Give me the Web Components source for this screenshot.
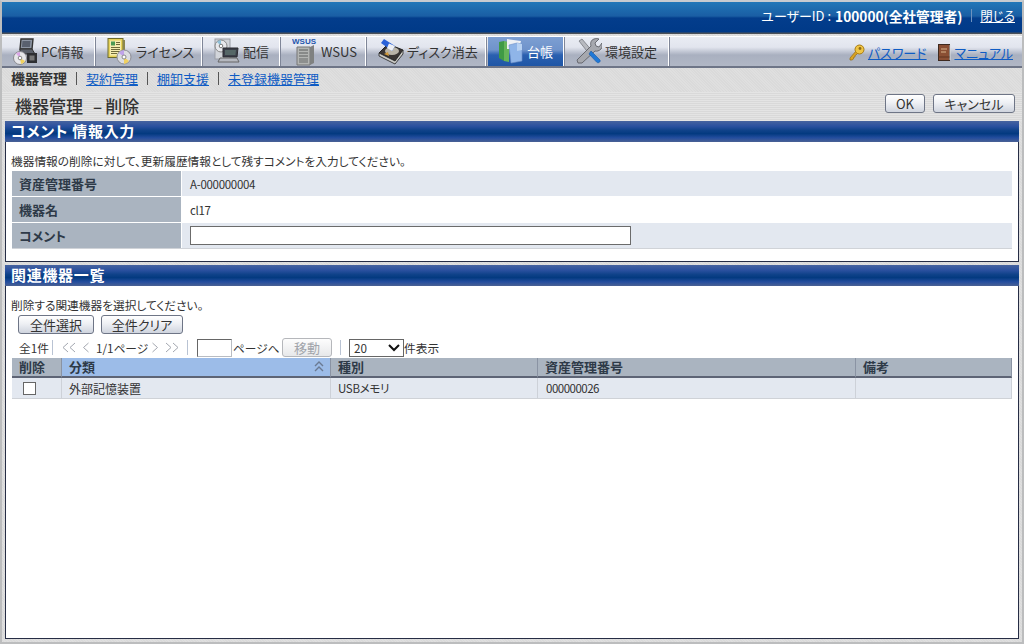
<!DOCTYPE html>
<html lang="ja">
<head>
<meta charset="utf-8">
<title>機器管理 - 削除</title>
<style>
  html, body { margin: 0; height: 100%; overflow: hidden; }
  body {
    font-family: "Noto Sans CJK JP", "Liberation Sans", sans-serif;
    font-size: 13px;
    color: #333;
    font-feature-settings: "palt";
  }
</style>
</head>
<body>
<app-shell>
  <app-header></app-header>

  <tab-bar>
    <nav-tab style="width:93px">
      <svg slot="icon" width="26" height="27" viewBox="0 0 26 27">
        <path d="M9 1h12l-1 10H8z" fill="#8d95a3" stroke="#333" stroke-width="1.4"/>
        <path d="M10.500 3h8l-.6 6h-8z" fill="#59606e"/>
        <path d="M8 11h12l3 5H8z" fill="#5a5f69" stroke="#333"/>
        <circle cx="8" cy="20" r="6.500" fill="#e7e7ea" stroke="#8a8a90"/>
        <path d="M8 20L4 15.500A6 6 0 0 1 8 14z" fill="#d9a6e6"/>
        <path d="M8 20l5 3a6 6 0 0 1-4 3z" fill="#f2d25c"/>
        <circle cx="8" cy="20" r="1.800" fill="#fff" stroke="#888"/>
        <rect x="15" y="15" width="10" height="10" fill="#2e2f33"/>
        <rect x="17.500" y="17.500" width="5" height="5" fill="#777"/>
      </svg>
      PC情報
    </nav-tab>
    <nav-tab style="width:105px">
      <svg slot="icon" width="26" height="27" viewBox="0 0 26 27">
        <rect x="1" y="0.500" width="15" height="19" fill="#e6d25a" stroke="#6d6a2c"/>
        <rect x="3" y="2.500" width="11" height="15" fill="#f5ecb0"/>
        <rect x="4" y="3.500" width="4" height="4" fill="#4c9a55"/>
        <path d="M9 4.500h4M9 6.500h4M4 9.500h9M4 11.500h9M4 13.500h9M4 15.500h6" stroke="#6e6a3a"/>
        <path d="M16 2h2v16h-2z" fill="#8b8750"/>
        <circle cx="17" cy="19" r="7" fill="#dcdde2" stroke="#8d8d94"/>
        <path d="M17 19l-5-4a7 7 0 0 1 5-3z" fill="#c0a3ea"/>
        <path d="M17 19l5 4a7 7 0 0 1-5 3z" fill="#f0d060"/>
        <circle cx="17" cy="19" r="2" fill="#fff" stroke="#888"/>
      </svg>
      ライセンス
    </nav-tab>
    <nav-tab style="width:76px">
      <svg slot="icon" width="26" height="27" viewBox="0 0 26 27">
        <rect x="1" y="1" width="15" height="20" fill="#d2d5da" stroke="#9a9da5"/>
        <circle cx="7" cy="8" r="6" fill="#e7e8ec" stroke="#888"/>
        <path d="M7 8L3 4a6 6 0 0 1 4-2z" fill="#8fc0d8"/>
        <circle cx="7" cy="8" r="1.800" fill="#fff" stroke="#777"/>
        <path d="M9 10h15l-1 9H9z" fill="#3b3f49" stroke="#2b2b30"/>
        <path d="M11 12h11l-.6 5H11z" fill="#566"/>
        <path d="M6 20h17l2 4H4z" fill="#b5b8bf" stroke="#666"/>
      </svg>
      配信
    </nav-tab>
    <nav-tab style="width:84px">
      <svg slot="icon" width="26" height="29" viewBox="0 0 26 29" style="margin-top:-1px">
        <text x="0" y="7" font-family="Liberation Sans" font-size="8" font-weight="700" fill="#1f56ad">WSUS</text>
        <path d="M5 10h13v18H5z" fill="#b3b5b3" stroke="#777"/>
        <path d="M18 10l4-2v18l-4 2z" fill="#7f8180"/>
        <path d="M7 13h9M7 16h9M7 19h9" stroke="#5d5f5e"/>
        <rect x="7" y="21" width="9" height="5" fill="#8d8f8e"/>
      </svg>
      WSUS
    </nav-tab>
    <nav-tab style="width:118px">
      <svg slot="icon" width="26" height="27" viewBox="0 0 26 27">
        <path d="M1 15l9-9 15 6-8 11z" fill="#3a3634" stroke="#222"/>
        <path d="M1 15v3l16 8 8-10v-4l-8 11z" fill="#c8c8c4" stroke="#222" stroke-width=".8"/>
        <ellipse cx="14" cy="13" rx="7" ry="4" fill="#b9b4a8"/>
        <path d="M10 14l-4 2 5 2z" fill="#d29a3a"/>
        <path d="M3 5l3-4 11 7-3 5z" fill="#2a62d8"/>
        <path d="M11 5.500l6 2.500-3 5-5-3z" fill="#eef0f4"/>
      </svg>
      ディスク消去
    </nav-tab>
    <nav-tab active style="width:76px">
      <svg slot="icon" width="26" height="27" viewBox="0 0 26 27">
        <path d="M1 4l5-1v20l-5-3z" fill="#3f9a45"/>
        <path d="M6 3l5 1v20l-5-1z" fill="#66b45a"/>
        <path d="M9 1l14 2-2 8H9z" fill="#eef1f5"/>
        <path d="M11 7l8-2 5 1v17l-11 2z" fill="#8fb5e8" stroke="#6d8fc6" stroke-width=".6"/>
        <path d="M19 5v8l5-1V6z" fill="#b8d2f2"/>
      </svg>
      台帳
    </nav-tab>
    <nav-tab style="width:103px">
      <svg slot="icon" width="26" height="27" viewBox="0 0 26 27">
        <path d="M3 3l3-2 11 13-3 3z" fill="#b8bac0" stroke="#6c6e75" stroke-width=".7"/>
        <path d="M2 25l-1-3L15 8c-1-3 0-6 3-7 2-.7 3.500-.6 5 0l-4 4 1 3 3 1 3-4c.6 2 .4 4.500-1 6-2 2-4 2.500-6 2L6 25z" fill="#a6a8ae" stroke="#55575d" stroke-width=".8"/>
        <path d="M15 13l9 9c.5 1 0 2-1 2.500-.8.4-1.700.3-2.400-.4L13 16z" fill="#1f78d6" stroke="#1456a6" stroke-width=".6"/>
      </svg>
      環境設定
    </nav-tab>
    <span slot="tools">
      <tool-link>
        <svg slot="icon" width="16" height="17" viewBox="0 0 16 17">
          <path d="M1 14l6-7 2 2-2 2-1 .5v1.500l-1.500.5v1.500L3 16H1z" fill="#d9a325" stroke="#9a6d10" stroke-width=".7"/>
          <circle cx="10.500" cy="5.500" r="4.500" fill="#f0c544" stroke="#a67a14"/>
          <circle cx="11" cy="4.500" r="1.400" fill="#8d6a18"/>
        </svg>
        パスワード
      </tool-link>
      <tool-link>
        <svg slot="icon" width="13" height="17" viewBox="0 0 13 17">
          <rect x="0.500" y="0.500" width="11" height="16" fill="#8a4f34" stroke="#3e2a20"/>
          <path d="M12 1v15" stroke="#ddd"/>
          <path d="M3 5h6M3 8h5" stroke="#d8b58c"/>
          <path d="M0.500 13h11" stroke="#5f3520"/>
        </svg>
        マニュアル
      </tool-link>
    </span>
  </tab-bar>

  <sub-nav>
    <b>機器管理</b><i></i>
    <a href="#">契約管理</a><i></i>
    <a href="#">棚卸支援</a><i></i>
    <a href="#">未登録機器管理</a>
  </sub-nav>

  <page-title>
    機器管理<span style="margin:0 3px 0 10px">–</span>削除
    <ui-button slot="actions" style="width:40px">OK</ui-button>
    <ui-button slot="actions" style="width:82px">キャンセル</ui-button>
  </page-title>

  <ui-panel heading="コメント 情報入力" style="height:141px">
    <p-note>機器情報の削除に対して、更新履歴情報として残すコメントを入力してください。</p-note>
    <info-row label="資産管理番号" shade><mono-text>A-000000004</mono-text></info-row>
    <info-row label="機器名"><mono-text>cl17</mono-text></info-row>
    <info-row label="コメント" shade last><text-field style="width:441px"></text-field></info-row>
  </ui-panel>

  <ui-panel heading="関連機器一覧" style="flex:1; margin-top:3px">
    <p-note>削除する関連機器を選択してください。</p-note>
    <button-row>
      <ui-button style="width:76px">全件選択</ui-button>
      <ui-button style="width:82px">全件クリア</ui-button>
    </button-row>
    <pager-bar></pager-bar>
    <device-table></device-table>
  </ui-panel>
</app-shell>

<script>
const sheet = `
  :host { box-sizing: border-box; }
  * { box-sizing: border-box; }
`;

class ShadowBase extends HTMLElement {
  constructor() {
    super();
    this.attachShadow({ mode: 'open' });
    this.shadowRoot.innerHTML = `<style>${sheet}${this.constructor.css}</style>${this.render()}`;
  }

  render() {
    return '<slot></slot>';
  }
}

class AppShell extends ShadowBase {
  static css = `
    :host {
      display: flex;
      flex-direction: column;
      width: 1024px;
      height: 644px;
      padding-bottom: 3px;
      overflow: hidden;
      border: 2px solid #bcbdbe;
      border-top-color: #c6cbd0;
      background: repeating-linear-gradient(45deg, #dfdfdf 0 1px, #dadada 1px 2px);
    }
  `;
}

class AppHeader extends ShadowBase {
  static css = `
    :host {
      display: flex;
      flex: none;
      justify-content: flex-end;
      align-items: center;
      height: 32px;
      padding: 0 7px 5px 0;
      color: #fff;
      font-size: 13px;
      background: linear-gradient(#2177b8 0, #1a5ea4 14px, #0f4f98 15px, #033d8c 16px, #003a88 30px, #4a5058 31px, #4a5058 32px);
    }
    b { font-size: 13.700px; margin-left: 4px; }
    i { width: 1px; height: 13px; background: #6d92bf; margin: 0 8px 0 9px; }
    a { color: #fff; font-size: 12.500px; }
  `;

  render() {
    return `ユーザーID : <b>100000(全社管理者)</b><i></i><a href="#">閉じる</a>`;
  }
}

class TabBar extends ShadowBase {
  static css = `
    :host {
      display: flex;
      flex: none;
      gap: 2px;
      height: 32px;
      margin-top: 2px;
      border-top: 1px solid #fff;
      border-bottom: 2px solid #6e7587;
      background: linear-gradient(#e9ecf3, #e2e5ee 35%, #a9b0c0 62%, #b1b7c5);
    }
    .tools { margin-left: auto; display: flex; align-items: center; padding-right: 9px; }
  `;

  render() {
    return `<slot></slot><div class="tools"><slot name="tools"></slot></div>`;
  }
}

class NavTab extends ShadowBase {
  static css = `
    :host {
      display: flex;
      flex: none;
      align-items: center;
      gap: 3px;
      height: 29px;
      padding-left: 10px;
      color: #333;
      font-size: 13px;
      white-space: nowrap;
      border-right: 1px solid #fff;
      box-shadow: 1px 0 0 #7f8698;
    }
    :host([active]) {
      color: #fff;
      background: linear-gradient(#7d9fd2, #6f93cb 45%, #2a60b0 62%, #1f56a6);
    }
    ::slotted(svg) { flex: none; }
  `;

  render() {
    return `<slot name="icon"></slot><slot></slot>`;
  }
}

class ToolLink extends ShadowBase {
  static css = `
    :host {
      display: inline-flex;
      align-items: center;
      gap: 3px;
      margin-left: 9px;
      color: #0f5cc4;
      text-decoration: underline;
      font-size: 13px;
      vertical-align: middle;
    }
  `;

  render() {
    return `<slot name="icon"></slot><span><slot></slot></span>`;
  }
}

class SubNav extends ShadowBase {
  static css = `
    :host {
      display: flex;
      flex: none;
      align-items: center;
      height: 24px;
      padding: 0 0 4px 9px;
      font-size: 13px;
    }
    ::slotted(a) { color: #0f5cc4; }
    ::slotted(b) { font-size: 14px; }
    ::slotted(i) { width: 1px; height: 13px; margin: 0 9px; background: #555; }
  `;
}

class PageTitle extends ShadowBase {
  static css = `
    :host {
      display: flex;
      flex: none;
      justify-content: space-between;
      height: 29px;
      padding: 2px 7px 0 13px;
      font-size: 17px;
      line-height: 23px;
      font-weight: 500;
      color: #333;
      background: repeating-linear-gradient(#e4e4e4 0 1px, #d9d9d9 1px 2px);
    }
    .actions { display: flex; gap: 8px; align-items: flex-start; }
  `;

  render() {
    return `<span><slot></slot></span><div class="actions"><slot name="actions"></slot></div>`;
  }
}

class UiButton extends ShadowBase {
  static css = `
    :host {
      display: inline-flex;
      align-items: center;
      justify-content: center;
      height: 19px;
      font-size: 13px;
      line-height: 17px;
      font-weight: 400;
      color: #333;
      white-space: nowrap;
      border: 1px solid #6e7586;
      border-radius: 3px;
      background: linear-gradient(#fff, #eef0f4 45%, #cfd4de);
    }
    :host([disabled]) {
      color: #a2a5ab;
      border-color: #b5b7bb;
      background: linear-gradient(#fdfdfd, #e7e8ea);
    }
  `;
}

class UiPanel extends ShadowBase {
  static css = `
    :host {
      display: flex;
      flex-direction: column;
      flex: none;
      margin: 0 3px;
      width: 1014px;
    }
    h2 {
      flex: none;
      margin: 0;
      height: 21px;
      padding-left: 6px;
      color: #fff;
      font-size: 15px;
      line-height: 20px;
      font-weight: 700;
      letter-spacing: .7px;
      background: linear-gradient(#46639f, #2a509f 25%, #0f4289 45%, #033a80 60%, #234d9e 80%, #4a6194);
    }
    .body {
      flex: 1;
      padding: 0 6px;
      background: #fff;
      border: 1px solid #262d45;
      border-top: 0;
    }
  `;

  render() {
    return `<h2>${this.getAttribute('heading')}</h2><div class="body"><slot></slot></div>`;
  }
}

class PNote extends ShadowBase {
  static css = `
    :host {
      display: block;
      height: 17px;
      margin: 11px 0 0 -1px;
      font-size: 11.700px;
      line-height: 15px;
      color: #333;
    }
  `;
}

class InfoRow extends ShadowBase {
  static css = `
    :host {
      display: grid;
      grid-template-columns: 169px 1fr;
      gap: 1px;
      height: 25px;
      margin: 1px 0;
      font-size: 12px;
    }
    :host([last]) { border-bottom: 1px solid #d0d3d8; height: 26px; }
    .label {
      display: flex;
      align-items: center;
      padding-left: 7px;
      font-size: 13px;
      font-weight: 700;
      color: #2e3a48;
      background: #aab4c0;
    }
    .value { display: flex; align-items: center; padding-left: 8px; background: #fff; }
    :host([shade]) .value { background: #e3e8f0; }
  `;

  render() {
    return `<div class="label">${this.getAttribute('label')}</div><div class="value"><slot></slot></div>`;
  }
}

class MonoText extends ShadowBase {
  static css = `
    :host { font-size: 11.500px; letter-spacing: -.3px; color: #333; font-feature-settings: normal; }
  `;
}

class TextField extends ShadowBase {
  static css = `
    :host {
      display: block;
      height: 19px;
      background: #fff;
      border: 1px solid #6b6b6b;
    }
  `;
}

class ButtonRow extends ShadowBase {
  static css = `
    :host { display: flex; gap: 7px; height: 23px; padding-left: 6px; align-items: flex-start; margin-top: 1px; }
  `;
}

class PagerBar extends ShadowBase {
  static css = `
    :host {
      display: flex;
      align-items: center;
      height: 19px;
      padding-left: 7px;
      font-size: 11.700px;
      color: #333;
      white-space: nowrap;
    }
    i { flex: none; width: 1px; height: 15px; background: #b9c3d3; }
    svg { flex: none; }
    .box { flex: none; width: 35px; height: 18px; background: #fff; border: 1px solid #b8bcc2; border-top-color: #666; border-left-color: #666; }
    .sel {
      flex: none;
      display: flex; align-items: center; justify-content: space-between;
      width: 55px; height: 18px; padding: 0 3px 0 4px; background: #fff; border: 1px solid #666;
    }
    ui-button { flex: none; width: 50px; }
  `;

  render() {
    const dbl = (d) => `<svg width="14" height="11" viewBox="0 0 14 11"><path d="${d}" fill="none" stroke="#a3a7b0"/></svg>`;
    const one = (d) => `<svg width="6" height="11" viewBox="0 0 6 11"><path d="${d}" fill="none" stroke="#a3a7b0"/></svg>`;
    return `<span style="width:30px">全1件</span><i style="margin:0 9px 0 3px"></i>
      ${dbl('M6 1L1 5.500 6 10M13 1L8 5.500 13 10')}
      <span style="width:7px"></span>
      ${one('M5.500 1L.5 5.500 5.500 10')}
      <span style="width:51px;margin:0 5px 0 7px">1/1ページ</span>
      ${one('M.5 1l5 4.500-5 4.500')}
      <span style="width:7px"></span>
      ${dbl('M1 1l5 4.500-5 4.500M8 1l5 4.500-5 4.500')}
      <i style="margin:0 9px 0 8px"></i>
      <div class="box"></div><span style="width:45px;margin:0 4px 0 1px">ページへ</span>
      <ui-button disabled>移動</ui-button>
      <i style="margin:0 8px"></i>
      <div class="sel">20
        <svg width="12" height="8" viewBox="0 0 12 8"><path d="M1 1l5 5 5-5" fill="none" stroke="#111" stroke-width="2"/></svg>
      </div>件表示`;
  }
}

class DeviceTable extends ShadowBase {
  static css = `
    :host {
      display: block;
      margin-top: 1px;
      font-size: 12px;
    }
    .row {
      display: grid;
      grid-template-columns: 50px 269px 207px 318px 156px;
    }
    .head > div {
      display: flex;
      align-items: center;
      justify-content: space-between;
      height: 20px;
      padding: 0 6px 2px 7px;
      font-size: 13px;
      font-weight: 700;
      color: #2e3a48;
      background: #aab4c0;
      border-right: 1px solid #8a93a3;
      border-bottom: 2px solid #5d6475;
    }
    .head > div.sorted { background: #9cbce8; }
    .head svg { margin-top: 2px; }
    .body > div {
      display: flex;
      align-items: center;
      height: 21px;
      padding: 0 7px;
      color: #333;
      background: #e3e8f0;
      border-right: 1px solid #cdd1d8;
      border-bottom: 1px solid #cfd2d7;
    }
    .check { width: 13px; height: 13px; margin-left: 4px; background: #fff; border: 1px solid #666; }
    .mono { margin-left: 1px; font-size: 11.500px; letter-spacing: -.5px; font-feature-settings: normal; }
    .usb { font-size: 11.500px; letter-spacing: -.3px; }
  `;

  render() {
    return `
      <div class="row head">
        <div>削除</div>
        <div class="sorted">分類
          <svg width="10" height="12" viewBox="0 0 10 12"><path d="M1 5l4-4 4 4M1 10l4-4 4 4" fill="none" stroke="#6a7a92" stroke-width="1.400"/></svg>
        </div>
        <div>種別</div>
        <div>資産管理番号</div>
        <div>備考</div>
      </div>
      <div class="row body">
        <div><span class="check"></span></div>
        <div>外部記憶装置</div>
        <div><span class="usb">USBメモリ</span></div>
        <div><span class="mono">000000026</span></div>
        <div></div>
      </div>`;
  }
}

customElements.define('app-shell', AppShell);
customElements.define('app-header', AppHeader);
customElements.define('tab-bar', TabBar);
customElements.define('nav-tab', NavTab);
customElements.define('tool-link', ToolLink);
customElements.define('sub-nav', SubNav);
customElements.define('page-title', PageTitle);
customElements.define('ui-button', UiButton);
customElements.define('ui-panel', UiPanel);
customElements.define('p-note', PNote);
customElements.define('info-row', InfoRow);
customElements.define('mono-text', MonoText);
customElements.define('text-field', TextField);
customElements.define('button-row', ButtonRow);
customElements.define('pager-bar', PagerBar);
customElements.define('device-table', DeviceTable);
</script>
</body>
</html>
